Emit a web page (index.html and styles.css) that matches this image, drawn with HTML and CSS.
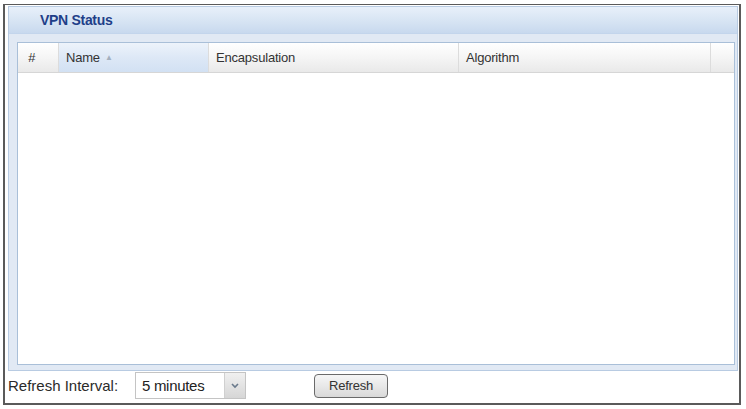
FILE: index.html
```html
<!DOCTYPE html>
<html>
<head>
    <title>VPN Status</title>
    <link rel="stylesheet" href="styles.css">
</head>
<body>
    <div class="frame">
        <div class="panel">
            <div class="panel-header">
                <span class="panel-title">VPN Status</span>
            </div>
            <div class="panel-body">
                <div class="grid">
                    <div class="grid-head">
                        <div class="col col-num">#</div>
                        <div class="col col-name sorted">Name <span class="sort-arrow">&#9650;</span></div>
                        <div class="col col-encap">Encapsulation</div>
                        <div class="col col-algo">Algorithm</div>
                        <div class="col col-pad"></div>
                    </div>
                    <div class="grid-rows"></div>
                </div>
            </div>
        </div>
        <div class="footer">
            <label class="interval-label" for="interval">Refresh Interval:</label>
            <div class="select">
                <span class="select-value" id="interval">5 minutes</span>
                <span class="select-btn">
                    <svg width="8" height="6" viewBox="0 0 8 6"><path d="M1 1 L4 4 L7 1" fill="none" stroke="#6a7a8c" stroke-width="1.6"/></svg>
                </span>
            </div>
            <button class="refresh-btn">Refresh</button>
        </div>
    </div>
</body>
</html>
```

FILE: styles.css
```css
body {
    margin: 0;
    padding: 0;
    background-color: #ffffff;
    font-family: 'Liberation Sans', Arial, sans-serif;
}

.frame {
    margin: 4px 0 0 3px;
    width: 730px;
    height: 397px;
    border: 2px solid #5a5a5a;
    border-top-width: 1px;
    padding: 1px 1px 0 3px;
    display: flex;
    flex-direction: column;
}

.panel {
    border: 1px solid #b8cbe2;
    display: flex;
    flex-direction: column;
    height: 363px;
}

.panel-header {
    height: 26px;
    background: linear-gradient(to bottom, #e8f0fa 0%, #d8e5f4 50%, #c8d9ee 100%);
    border-bottom: 1px solid #c3d5ec;
    display: flex;
    align-items: center;
    padding-left: 31px;
}

.panel-title {
    font-weight: bold;
    font-size: 14px;
    color: #1f3f89;
    letter-spacing: -0.3px;
}

.panel-body {
    flex: 1;
    background-color: #e1e9f4;
    padding: 8px 2px 5px 8px;
    display: flex;
}

.grid {
    flex: 1;
    border: 1px solid #a9bfd8;
    background-color: #ffffff;
    display: flex;
    flex-direction: column;
}

.grid-head {
    height: 29px;
    display: flex;
    background: linear-gradient(to bottom, #ffffff 0%, #f5f5f5 50%, #e9e9e9 100%);
    border-bottom: 1px solid #d6d6d6;
}

.col {
    font-size: 13px;
    color: #333333;
    display: flex;
    align-items: center;
    padding-left: 7px;
    border-right: 1px solid #dcdcdc;
    box-sizing: border-box;
    letter-spacing: -0.2px;
}

.col-num { width: 41px; padding-left: 10px; font-style: italic; }
.col-name { width: 150px; }
.col-encap { width: 250px; }
.col-algo { width: 252px; }
.col-pad { flex: 1; border-right: none; }

.sorted {
    background: linear-gradient(to bottom, #edf3fb 0%, #dde8f6 50%, #d2e1f3 100%);
}

.sort-arrow {
    font-size: 8px;
    color: #a4b0be;
    margin-left: 5px;
}

.grid-rows {
    flex: 1;
}

.footer {
    flex: 1;
    display: flex;
    align-items: center;
    padding-bottom: 3px;
}

.interval-label {
    font-size: 15px;
    color: #2a2a2a;
    width: 127px;
}

.select {
    width: 109px;
    height: 25px;
    border: 1px solid #c4c4c4;
    display: flex;
    background-color: #ffffff;
}

.select-value {
    flex: 1;
    font-size: 15px;
    color: #222222;
    display: flex;
    align-items: center;
    padding-left: 6px;
    letter-spacing: -0.3px;
}

.select-btn {
    width: 20px;
    background: linear-gradient(to bottom, #f0f0f0, #d6d6d6);
    border-left: 1px solid #d0d0d0;
    display: flex;
    align-items: center;
    justify-content: center;
}

.refresh-btn {
    margin-left: 68px;
    width: 74px;
    height: 24px;
    border: 1px solid #6a6a6a;
    border-radius: 4px;
    background: linear-gradient(to bottom, #f6f6f6 0%, #e8e8e8 50%, #d9d9d9 100%);
    font-size: 13px;
    font-family: 'Liberation Sans', Arial, sans-serif;
    color: #333333;
    padding: 0;
    letter-spacing: -0.2px;
}
```
